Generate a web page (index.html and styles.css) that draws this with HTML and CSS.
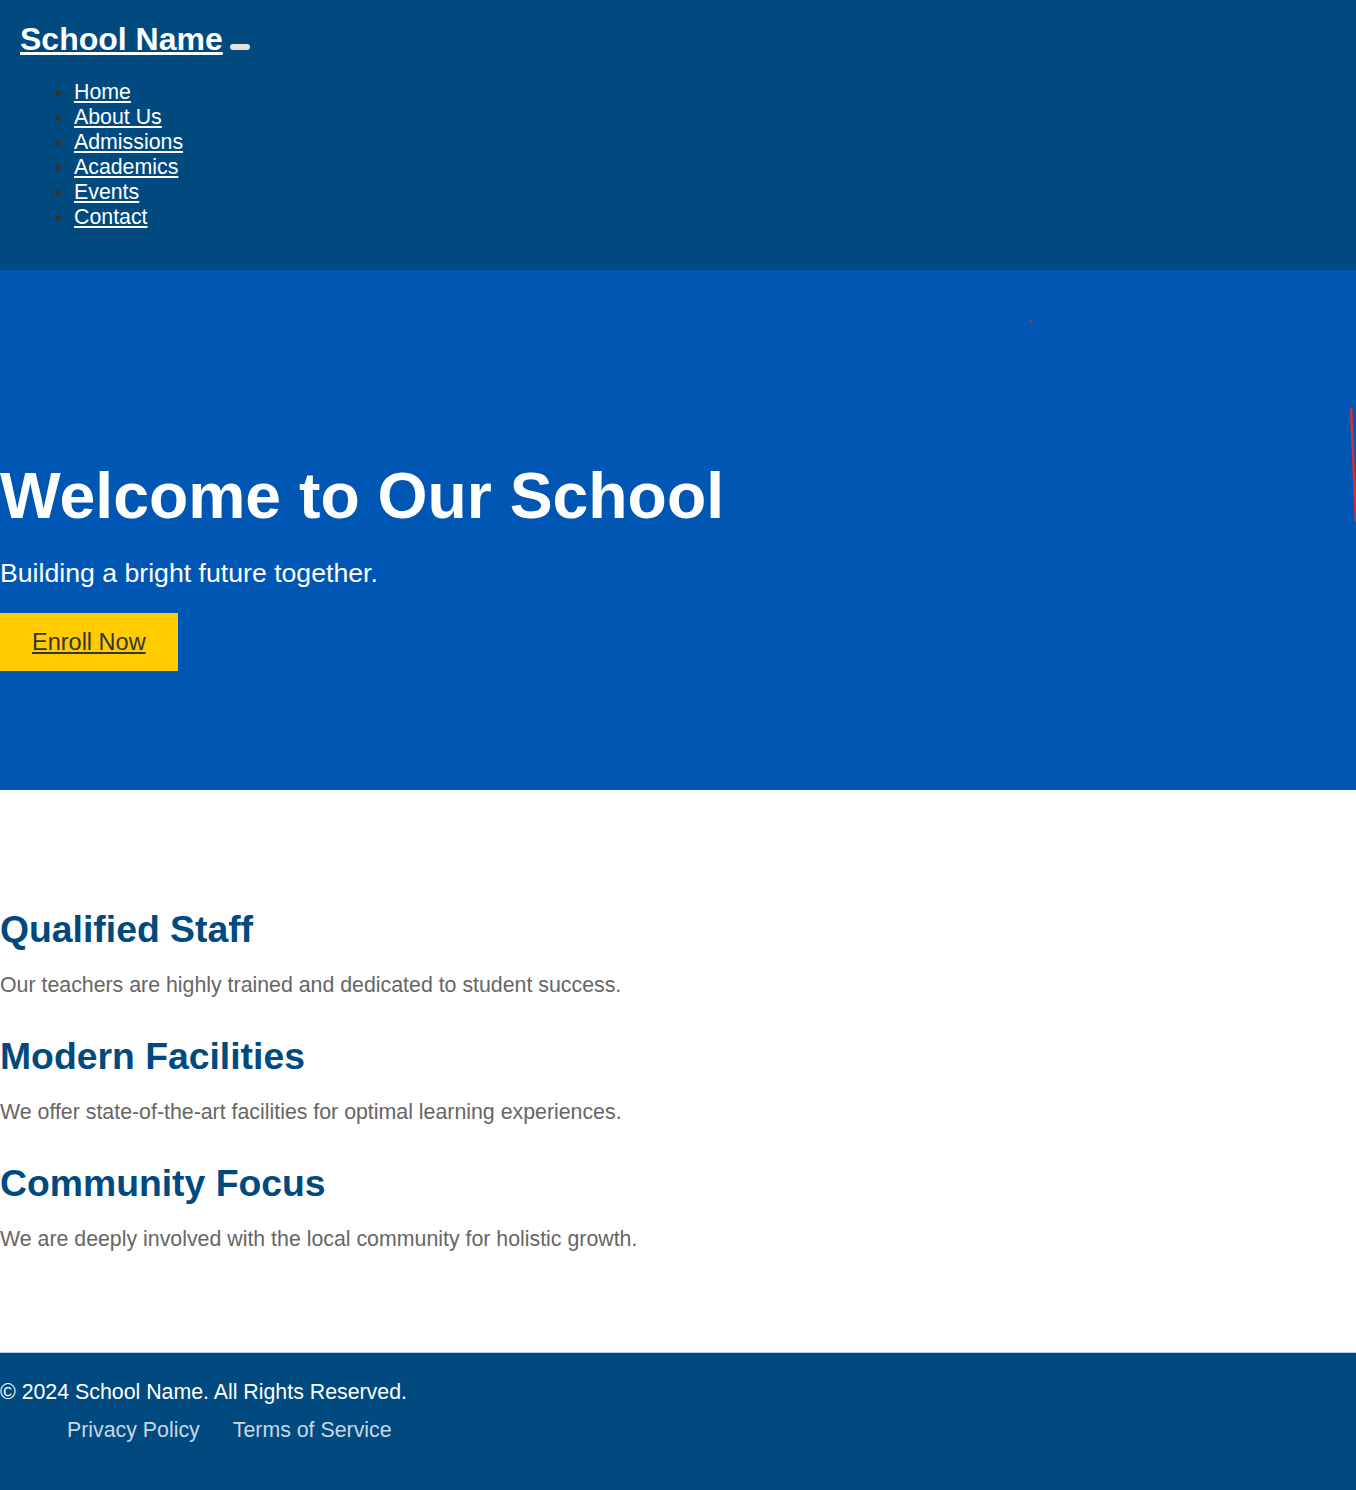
FILE: index.html
```html
<!DOCTYPE html>
<html lang="en">
<head>
<meta charset="utf-8">
<title>School Name</title>
<link rel="stylesheet" href="styles.css">
</head>
<body>
<header class="site-header">
  <div class="brand-row">
    <a class="brand" href="#">School Name</a>
    <span class="menu-toggle"></span>
  </div>
  <nav>
    <ul class="nav-list">
      <li><a href="#">Home</a></li>
      <li><a href="#">About Us</a></li>
      <li><a href="#">Admissions</a></li>
      <li><a href="#">Academics</a></li>
      <li><a href="#">Events</a></li>
      <li><a href="#">Contact</a></li>
    </ul>
  </nav>
</header>
<section class="hero">
  <svg class="hero-marks" width="1356" height="520" viewBox="0 0 1356 520" aria-hidden="true">
    <circle cx="1030.5" cy="51.5" r="1.3" fill="#c8303c"/>
    <line x1="1351" y1="138" x2="1356" y2="252" stroke="#d0313c" stroke-width="2.5"/>
  </svg>
  <h1 class="hero-title">Welcome to Our School</h1>
  <p class="hero-sub">Building a bright future together.</p>
  <a class="btn-enroll" href="#">Enroll Now</a>
</section>
<section class="features">
  <div class="feature">
    <h3 class="feature-title">Qualified Staff</h3>
    <p class="feature-text">Our teachers are highly trained and dedicated to student success.</p>
  </div>
  <div class="feature">
    <h3 class="feature-title">Modern Facilities</h3>
    <p class="feature-text">We offer state-of-the-art facilities for optimal learning experiences.</p>
  </div>
  <div class="feature">
    <h3 class="feature-title">Community Focus</h3>
    <p class="feature-text">We are deeply involved with the local community for holistic growth.</p>
  </div>
</section>
<footer class="site-footer">
  <p class="copy">© 2024 School Name. All Rights Reserved.</p>
  <ul class="footer-links">
    <li><a href="#">Privacy Policy</a></li>
    <li><a href="#">Terms of Service</a></li>
  </ul>
</footer>
</body>
</html>
```
FILE: styles.css
```css
html, body {
  margin: 0;
  padding: 0;
}
body {
  font-family: "Liberation Sans", Arial, sans-serif;
  font-size: 21.33px;
  color: #333;
  background: #fff;
}
.site-header {
  background: #004a80;
  padding: 21px 20px 20px;
}
.brand-row {
  display: flex;
  align-items: baseline;
}
.brand {
  color: #fff;
  font-size: 32px;
  font-weight: bold;
  line-height: 36px;
}
.menu-toggle {
  display: inline-block;
  width: 20px;
  height: 6px;
  margin-left: 7px;
  background: #e2e2e2;
  border-radius: 3px;
}
.nav-list {
  margin: 23px 0 20px;
  padding-left: 54px;
  color: #333;
  line-height: 25px;
}
.nav-list a {
  color: #fff;
}
.hero {
  position: relative;
  background: #0056b3;
  height: 520px;
  box-sizing: border-box;
  padding-top: 190px;
  overflow: hidden;
}
.hero-marks {
  position: absolute;
  left: 0;
  top: 0;
}
.hero-title {
  margin: 0 0 26px;
  color: #fff;
  font-size: 64.3px;
  font-weight: bold;
  line-height: 73px;
}
.hero-sub {
  margin: 0 0 26px;
  color: #fff;
  font-size: 26.67px;
  line-height: 28px;
}
.btn-enroll {
  display: inline-block;
  background: #ffcc00;
  color: #333;
  font-size: 23.5px;
  line-height: 28px;
  padding: 15px 32px;
}
.features {
  padding: 118px 0 100px;
}
.feature + .feature {
  margin-top: 37px;
}
.feature-title {
  margin: 0 0 22px;
  color: #004a80;
  font-size: 37.33px;
  font-weight: bold;
  line-height: 43px;
}
.feature-text {
  margin: 0;
  color: #666;
  line-height: 25px;
}
.site-footer {
  background: #004a80;
  border-top: 1px solid #b8cde0;
  padding: 27px 0 47px;
  color: #fff;
}
.copy {
  margin: 0 0 13px;
  line-height: 25px;
}
.footer-links {
  display: flex;
  gap: 33px;
  margin: 0;
  padding-left: 67px;
  list-style: none;
  line-height: 25px;
}
.footer-links a {
  color: #c9d6e3;
  text-decoration: none;
}
```
